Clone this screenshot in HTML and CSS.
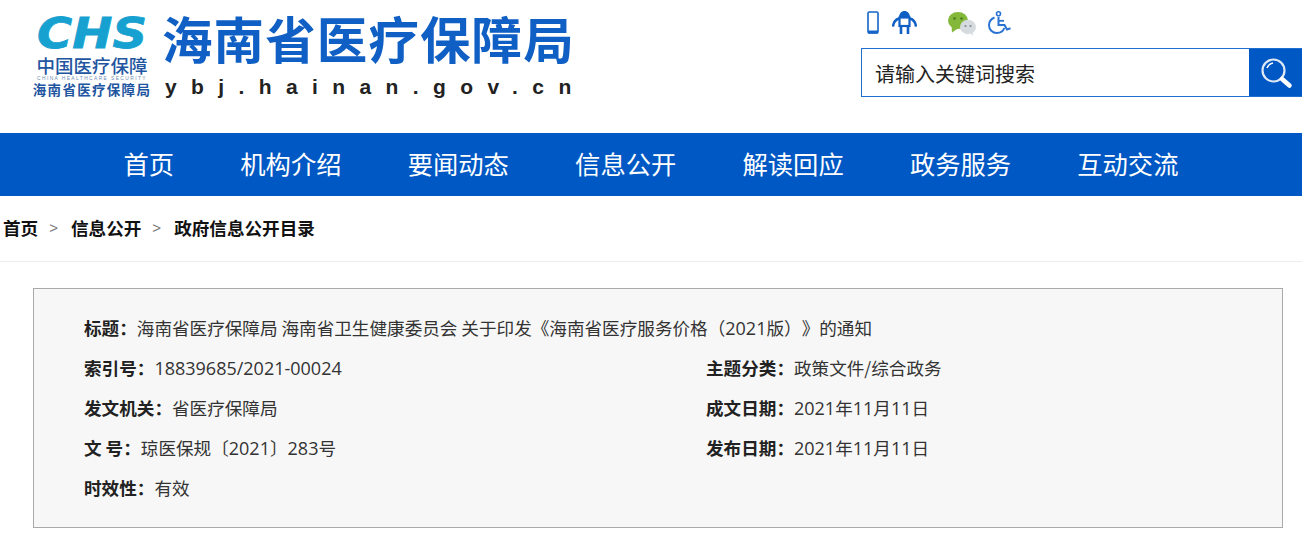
FILE: index.html
```html
<!DOCTYPE html>
<html lang="zh-CN">
<head>
<meta charset="utf-8">
<title>海南省医疗保障局</title>
<link rel="stylesheet" href="styles.css">
</head>
<body>
<header class="header">
  <div class="brand">
    <div class="mark">
      <svg class="mark-svg" width="120" height="39" viewBox="0 0 120 39"><text class="mark-chs" x="5" y="32" textLength="110" lengthAdjust="spacingAndGlyphs">CHS</text></svg>
      <div class="mark-cn">中国医疗保障</div>
      <div class="mark-en">CHINA HEALTHCARE SECURITY</div>
      <div class="mark-sub">海南省医疗保障局</div>
    </div>
    <div class="site">
      <div class="site-name">海南省医疗保障局</div>
      <div class="site-url">ybj.hainan.gov.cn</div>
    </div>
  </div>
  <div class="tools">
    <div class="icons">
      <svg class="icon phone" width="12" height="23" viewBox="0 0 12 23"><rect x="1" y="1" width="10" height="21" rx="1.200" fill="none" stroke="#1565c8" stroke-width="1.600"/><rect x="1" y="19.500" width="10" height="3" fill="#1565c8"/></svg>
      <svg class="icon robot" width="25" height="23" viewBox="0 0 25 23"><path d="M7 6.500C7 2.500 9.500 0 12.500 0S18 2.500 18 6.500z" fill="#0f5fc4"/><rect x="7.500" y="6.500" width="10" height="8.500" fill="none" stroke="#0f5fc4" stroke-width="2.200"/><path d="M7 7.500C3.500 8.500 1.500 11 1 15.500M18 7.500C21.500 8.500 23.500 11 24 15.500" fill="none" stroke="#0f5fc4" stroke-width="2.400"/><path d="M9 15v8M16 15v8" stroke="#0f5fc4" stroke-width="2.600"/></svg>
      <svg class="icon wechat" width="28" height="24" viewBox="0 0 28 24"><ellipse cx="10" cy="8.500" rx="10" ry="8.500" fill="#84b83a"/><path d="M3.500 13 4 20.500 10.500 16z" fill="#84b83a"/><circle cx="6.500" cy="6.500" r="1.300" fill="#4b7a1f"/><circle cx="13.500" cy="6.500" r="1.300" fill="#4b7a1f"/><ellipse cx="20" cy="15" rx="8" ry="7.200" fill="#d5dbdf"/><path d="M22 20.500l3 3.500-.5-5z" fill="#d5dbdf"/><circle cx="17.500" cy="14" r="1.100" fill="#7f8a91"/><circle cx="22.500" cy="14" r="1.100" fill="#7f8a91"/></svg>
      <svg class="icon access" width="23" height="23" viewBox="0 0 23 23"><circle cx="10.500" cy="2.800" r="2" fill="none" stroke="#2a73d2" stroke-width="1.600"/><path d="M6.500 6.500C2.800 8 1 11 1 14.200c0 4.500 3.500 7.800 7.800 7.800 3.800 0 6.500-2.200 7.500-5" fill="none" stroke="#2a73d2" stroke-width="2"/><path d="M10.500 6v8h6l2.500 4.500 3.500-1.300" fill="none" stroke="#2a73d2" stroke-width="2"/><path d="M10.500 9.800h5.500" stroke="#2a73d2" stroke-width="1.800"/></svg>
    </div>
    <div class="search">
      <div class="search-input">请输入关键词搜索</div>
      <div class="search-btn">
        <svg width="34" height="34" viewBox="0 0 34 34"><circle cx="14.500" cy="14.500" r="11" fill="none" stroke="#dfe9f6" stroke-width="2.200"/><path d="M8 12a8 8 0 0 1 6-5" fill="none" stroke="#fff" stroke-width="1.500"/><path d="M23 23l7.500 6.500" stroke="#fff" stroke-width="4.500" stroke-linecap="round"/></svg>
      </div>
    </div>
  </div>
</header>
<nav class="nav">
  <a>首页</a><a>机构介绍</a><a>要闻动态</a><a>信息公开</a><a>解读回应</a><a>政务服务</a><a>互动交流</a>
</nav>
<div class="crumbs">
  <a>首页</a><span class="sep">&gt;</span><a>信息公开</a><span class="sep">&gt;</span><a>政府信息公开目录</a>
</div>
<section class="info">
  <div class="row"><div><b>标题：</b>海南省医疗保障局 海南省卫生健康委员会 关于印发《海南省医疗服务价格（<span class="num">2021</span>版）》的通知</div></div>
  <div class="row two"><div><b>索引号：</b><span class="num">18839685/2021-00024</span></div><div><b>主题分类：</b>政策文件/综合政务</div></div>
  <div class="row two"><div><b>发文机关：</b>省医疗保障局</div><div><b>成文日期：</b><span class="num">2021</span>年<span class="num">11</span>月<span class="num">11</span>日</div></div>
  <div class="row two"><div><b>文 号：</b>琼医保规〔<span class="num">2021</span>〕<span class="num">283</span>号</div><div><b>发布日期：</b><span class="num">2021</span>年<span class="num">11</span>月<span class="num">11</span>日</div></div>
  <div class="row"><div><b>时效性：</b>有效</div></div>
</section>
</body>
</html>
```
FILE: styles.css
```css
* { box-sizing: border-box; }
html, body { margin: 0; padding: 0; background: #fff; overflow: hidden; }
body { width: 1302px; height: 543px; font-family: "Noto Sans CJK SC", "Liberation Sans", sans-serif; color: #222; text-spacing-trim: space-all; }

.header { height: 133px; display: flex; justify-content: space-between; }
.brand { display: flex; padding: 16px 0 0 32px; }
.mark { width: 120px; text-align: center; white-space: nowrap; }
.mark-svg { display: block; overflow: visible; }
.mark-chs { font: italic 700 42px "DejaVu Sans", sans-serif; fill: #17a1d0; stroke: #17a1d0; stroke-width: .8px; }
.mark-cn { font-size: 18.500px; line-height: 20px; font-weight: 500; color: #22559f; }
.mark-en { font: 4.900px/5px "Liberation Sans", sans-serif; color: #6f8db3; letter-spacing: 1.400px; margin-top: 1px; }
.mark-sub { font-size: 13.500px; line-height: 17px; font-weight: 700; color: #22559f; letter-spacing: 1.300px; margin-top: 0; }
.site { margin-left: 10px; margin-top: -7px; }
.site-name { font-size: 50.500px; line-height: 56px; font-weight: 700; color: #0f5fc4; letter-spacing: 1.100px; white-space: nowrap; }
.site-url { margin-top: 9px; margin-left: 3px; font: 700 21px/26px "Liberation Sans", sans-serif; color: #222; letter-spacing: 14.400px; white-space: nowrap; }

.tools { width: 441px; padding-top: 11px; }
.icons { height: 37px; display: flex; align-items: flex-start; padding-left: 6px; }
.phone { margin-right: 13px; }
.robot { margin-right: 31px; }
.wechat { margin-right: 12px; margin-top: 1px; }
.search { display: flex; height: 49px; border: 1px solid #1e6fd0; border-right: 0; }
.search-input { flex: 1; padding-left: 13px; font-size: 20px; line-height: 49px; color: #222; }
.search-btn { width: 53px; background: #0058c4; display: flex; align-items: center; justify-content: center; }

.nav { height: 63px; background: #0058c4; display: flex; justify-content: center; align-items: center; }
.nav a { color: #fff; font-size: 25.300px; line-height: 61px; padding: 0 33.100px 2px; }

.crumbs { height: 66px; border-bottom: 1px solid #ececec; display: flex; align-items: center; padding: 0 0 2px 3px; font-size: 17.600px; font-weight: 700; color: #111; }
.sep { font-weight: 400; font-size: 15px; color: #777; margin: 0 13px 0 11px; font-family: "Liberation Sans", sans-serif; }

.info { margin: 26px 19px 0 33px; height: 240px; border: 1px solid #aaa; background: #f7f7f7; padding: 19px 0 0 50px; font-size: 17.600px; color: #333; }
.row { height: 40px; line-height: 40px; display: flex; white-space: nowrap; }
.row b { color: #222; }
.num { font-family: "Open Sans", sans-serif; font-size: 18px; }
.row.two > div:first-child { width: 622px; }
```
